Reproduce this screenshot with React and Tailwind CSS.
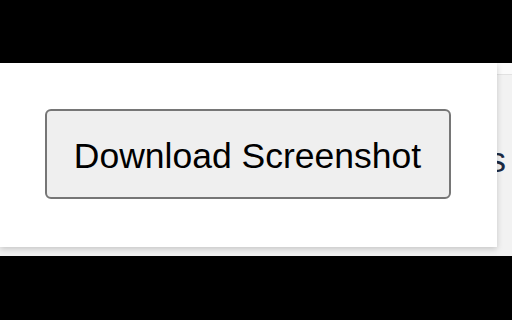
import React from 'react';

const App = () => {
  return (
    <div className="w-[512px] h-[320px] bg-black flex flex-col overflow-hidden" style={{ fontFamily: '"Liberation Sans", Arial, sans-serif' }}>
      <div className="h-[63px] shrink-0" />
      <div className="flex h-[193px] shrink-0 bg-[#f1f1f1]">
        {/* popup panel */}
        <div className="w-[497px] h-[184px] shrink-0 bg-white shadow-[0_2px_6px_rgba(0,0,0,0.18)] relative z-10 flex items-center justify-center pr-[2px] pb-[3px]">
          <button className="w-[406px] h-[90px] bg-[#efefef] border-2 border-[#767676] rounded-[6px] text-[35.5px] text-black leading-none pt-[6px]">
            Download Screenshot
          </button>
        </div>
        {/* page behind, mostly covered by the panel */}
        <div className="flex-1 min-w-0 flex flex-col bg-[#f2f2f2]">
          <div className="h-[12px] shrink-0 bg-[#fbfbfb] border-b border-[#e2e2e2]" />
          <div className="flex-1 flex items-center justify-end pr-[6px] pb-[10px]">
            <span className="shrink-0 text-[35.5px] leading-none text-[#1b2a44] whitespace-nowrap">s</span>
          </div>
        </div>
      </div>
    </div>
  );
};

export default App;
